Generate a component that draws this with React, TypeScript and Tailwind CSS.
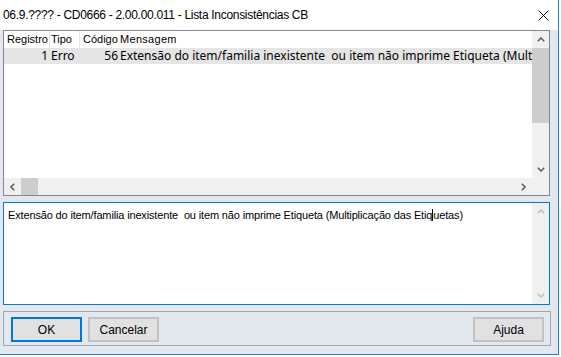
import React from "react";

const Chevron = ({ dir, color = "#606060" }: { dir: "up" | "down" | "left" | "right"; color?: string }) => {
  const paths: Record<string, string> = {
    up: "M0.8 4.2 L4 1 L7.2 4.2",
    down: "M0.8 0.8 L4 4 L7.2 0.8",
    left: "M4.2 0.8 L1 4 L4.2 7.2",
    right: "M0.8 0.8 L4 4 L0.8 7.2",
  };
  const vertical = dir === "up" || dir === "down";
  return (
    <svg width={vertical ? 8 : 5} height={vertical ? 5 : 8} viewBox={vertical ? "0 0 8 5" : "0 0 5 8"}>
      <path d={paths[dir]} stroke={color} strokeWidth="1.6" fill="none" />
    </svg>
  );
};

const Button = ({ label, focused = false }: { label: string; focused?: boolean }) => (
  <button
    className={
      "w-[71px] h-[25px] bg-[#e1e1e1] text-[12px] text-black flex items-center justify-center border-2 " +
      (focused ? "border-[#0078d7]" : "border-[#c2c2c2]")
    }
  >
    {label}
  </button>
);

const App = () => {
  return (
    <div className="w-[561px] h-[357px] bg-white font-['Liberation_Sans',sans-serif] text-black overflow-hidden">
      <div className="w-[559px] h-[355px] border-r border-b border-[#1883d7] bg-[#e3e7ee] flex flex-col">
        {/* Title bar */}
        <div className="h-[30px] bg-white flex items-center justify-between pl-[3px] pr-[9px]">
          <span className="text-[12px] tracking-[-0.3px]">06.9.???? - CD0666 - 2.00.00.011 - Lista Inconsistências CB</span>
          <svg width="11" height="11" viewBox="0 0 11 11">
            <path d="M0.5 0.5 L10.5 10.5 M10.5 0.5 L0.5 10.5" stroke="#111" strokeWidth="1" />
          </svg>
        </div>

        <div className="flex-1 flex flex-col pl-[3px]">
          {/* List view */}
          <div className="w-[547px] h-[166px] border border-[#828790] bg-white flex">
            <div className="flex-1 min-w-0 flex flex-col">
              <div className="flex-1 overflow-hidden">
                <div className="h-[17px] flex items-center text-[11px]">
                  <div className="w-[46px] shrink-0 h-full pl-[3px] flex items-center border-r border-[#e5e5e5]">Registro</div>
                  <div className="w-[30px] shrink-0 h-full pl-[1px] flex items-center border-r border-[#e5e5e5]">Tipo</div>
                  <div className="w-[40px] shrink-0 h-full pl-[3px] flex items-center">Código</div>
                  <div className="tracking-[0.3px]">Mensagem</div>
                </div>
                <div className="h-[16px] bg-[#e5e5e5] flex items-center whitespace-nowrap overflow-hidden font-['Noto_Sans',sans-serif] text-[12px] leading-[16px]">
                  <div className="w-[46px] shrink-0 pr-[2px] text-right">1</div>
                  <div className="w-[30px] shrink-0 pl-[1px]">Erro</div>
                  <div className="w-[40px] shrink-0 pr-[2px] text-right">56</div>
                  <div>Extensão do item/familia inexistente&nbsp; ou item não imprime Etiqueta (Multiplicação das Etiquetas)</div>
                </div>
              </div>
              {/* Horizontal scrollbar */}
              <div className="h-[17px] bg-[#f0f0f0] flex items-center">
                <div className="w-[17px] h-full flex items-center justify-center">
                  <Chevron dir="left" />
                </div>
                <div className="w-[17px] h-full bg-[#cdcdcd]" />
                <div className="flex-1" />
                <div className="w-[17px] h-full flex items-center justify-center">
                  <Chevron dir="right" />
                </div>
              </div>
            </div>
            {/* Vertical scrollbar */}
            <div className="w-[17px] shrink-0 flex flex-col">
              <div className="flex-1 bg-[#f0f0f0] flex flex-col">
                <div className="h-[17px] flex items-center justify-center">
                  <Chevron dir="up" />
                </div>
                <div className="h-[75px] bg-[#cdcdcd]" />
                <div className="flex-1" />
                <div className="h-[17px] flex items-center justify-center">
                  <Chevron dir="down" />
                </div>
              </div>
              <div className="h-[17px] bg-[#f0f0f0]" />
            </div>
          </div>

          {/* Memo */}
          <div className="mt-[6px] w-[547px] h-[103px] border border-[#0078d7] bg-white flex">
            <div className="flex-1 min-w-0 pl-[4px] pt-[4px] text-[11px] whitespace-nowrap tracking-[-0.15px]">
              Extensão do item/familia inexistente&nbsp; ou item não imprime Etiqueta (Multiplicação das Etiq
              <span className="inline-block w-px h-[12px] bg-black align-[-2px]" />
              uetas)
            </div>
            <div className="w-[17px] shrink-0 bg-[#f0f0f0] flex flex-col justify-between">
              <div className="h-[17px] flex items-center justify-center">
                <Chevron dir="up" color="#c0c0c0" />
              </div>
              <div className="h-[17px] flex items-center justify-center">
                <Chevron dir="down" color="#c0c0c0" />
              </div>
            </div>
          </div>

          {/* Button panel */}
          <div className="mt-[6px] w-[548px] h-[35px] border border-[#a3a6ad] flex items-start pt-[5px] pl-[7px] pr-[6px]">
            <div className="flex gap-[6px]">
              <Button label="OK" focused />
              <Button label="Cancelar" />
            </div>
            <div className="ml-auto">
              <Button label="Ajuda" />
            </div>
          </div>
        </div>
      </div>
    </div>
  );
};

export default App;
